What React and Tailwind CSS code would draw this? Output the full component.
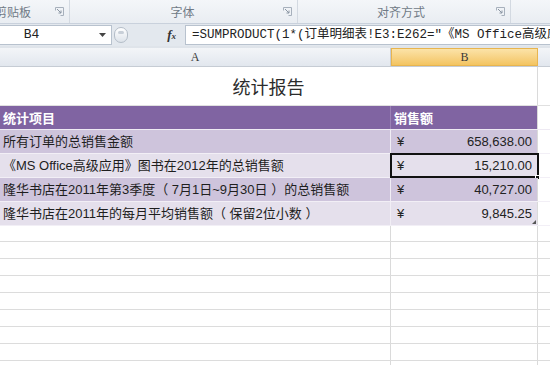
import React from 'react';

const cjk = { fontFamily: '"Noto Sans CJK SC", "Noto Sans", sans-serif' };
const cell = { fontFamily: '"Liberation Sans", "Noto Sans CJK SC", sans-serif' };
const mono = { fontFamily: '"Liberation Mono", "Noto Sans CJK SC", monospace' };

function Launcher() {
  return (
    <svg width="9" height="9" viewBox="0 0 9 9" className="shrink-0">
      <path d="M0.5 3.5V0.5H8.5V8.5H5.5" fill="none" stroke="#a7b0bc" strokeWidth="1" />
      <path d="M2 2L6 6M6 3.5V6H3.5" fill="none" stroke="#8a95a3" strokeWidth="1" />
    </svg>
  );
}

const rows = [
  { label: '所有订单的总销售金额', value: '658,638.00', bg: 'bg-[#cec4dc]' },
  { label: '《MS Office高级应用》图书在2012年的总销售额', value: '15,210.00', bg: 'bg-[#e5e0ec]', active: true },
  { label: '隆华书店在2011年第3季度（ 7月1日~9月30日 ）的总销售额', value: '40,727.00', bg: 'bg-[#cec4dc]' },
  { label: '隆华书店在2011年的每月平均销售额（ 保留2位小数 ）', value: '9,845.25', bg: 'bg-[#e5e0ec]', last: true },
];

export default function App() {
  return (
    <div className="w-[550px] h-[365px] overflow-hidden bg-white flex flex-col" style={cjk}>
      {/* ribbon group labels */}
      <div className="h-[24px] shrink-0 flex bg-gradient-to-b from-[#f4f6f9] to-[#e9edf2] border-b border-[#c9d1dc] text-[12px] text-[#707a86]">
        <div className="w-[70px] flex items-center justify-between pr-[5px] border-r border-[#d3d9e1]">
          <span className="-ml-[5px]">剪贴板</span>
          <Launcher />
        </div>
        <div className="w-[228px] flex items-center pr-[5px] border-r border-[#d3d9e1]">
          <span className="flex-1 text-center pl-[12px]">字体</span>
          <Launcher />
        </div>
        <div className="w-[213px] flex items-center pr-[5px] border-r border-[#d3d9e1]">
          <span className="flex-1 text-center pl-[8px]">对齐方式</span>
          <Launcher />
        </div>
        <div className="flex-1" />
      </div>

      {/* formula bar */}
      <div className="h-[22px] shrink-0 flex items-center bg-[#e3e8ee]">
        <div className="w-[112px] h-[20px] bg-white border border-l-0 border-[#b8c2ce] flex items-center">
          <span className="flex-1 text-center text-[13px] text-[#222] pr-[36px]" style={mono}>B4</span>
          <svg width="7" height="4" viewBox="0 0 7 4" className="mr-[5px]">
            <path d="M0 0H7L3.5 4Z" fill="#444" />
          </svg>
        </div>
        <div className="w-[14px] h-[16px] ml-[2px] rounded-full border border-[#b4bdc8] bg-gradient-to-b from-white to-[#dde3ea] flex items-start justify-center">
          <div className="w-[6px] h-[3px] mt-[3px] rounded-full bg-[#c8cfd8]" />
        </div>
        <div className="flex-1 flex items-center justify-end pr-[9px]">
          <span className="italic text-[13px] text-[#333] font-semibold" style={{ fontFamily: '"Liberation Serif", serif' }}>
            f<span className="text-[9px]">x</span>
          </span>
        </div>
        <div className="w-[365px] h-[20px] bg-white border-y border-l border-[#b8c2ce] flex items-center pl-[6px] overflow-hidden whitespace-nowrap text-[12.5px] text-[#222]" style={mono}>
          =SUMPRODUCT(1*(订单明细表!E3:E262="《MS Office高级应用》")*订单明细表!H3:H262)
        </div>
      </div>
      <div className="h-[2px] shrink-0 bg-[#dfe4ea]" />

      {/* column headers */}
      <div className="h-[19px] shrink-0 flex text-[12px] text-[#3a3a3a] border-b border-[#c6ccd4]" style={{ fontFamily: '"Liberation Serif", "Noto Sans CJK SC", serif' }}>
        <div className="w-[391px] flex items-center justify-center bg-gradient-to-b from-[#f3f5f8] to-[#e2e7ee] border-r border-[#c6ccd4]">A</div>
        <div className="w-[147px] flex items-center justify-center bg-gradient-to-b from-[#fbe3a8] to-[#f3c460] border border-[#e8b54f]">B</div>
        <div className="flex-1 bg-gradient-to-b from-[#f3f5f8] to-[#e2e7ee]" />
      </div>

      {/* title row */}
      <div className="h-[39px] shrink-0 flex border-b border-[#e0e0e0]">
        <div className="w-[538px] flex items-center justify-center text-[18px] text-[#2b2b2b] border-r border-[#dadada]">统计报告</div>
        <div className="flex-1" />
      </div>

      {/* table header */}
      <div className="h-[24px] shrink-0 flex border-b border-[#eeeaf3]">
        <div className="w-[391px] bg-[#8064a2] flex items-center pl-[3px] text-[13px] font-bold text-white border-r border-[#9a82b6]">统计项目</div>
        <div className="w-[147px] bg-[#8064a2] flex items-center pl-[3px] text-[13px] font-bold text-white border-r border-[#dadada]">销售额</div>
        <div className="flex-1" />
      </div>

      {rows.map((r, i) => (
        <div key={i} className="h-[24px] shrink-0 flex border-b border-[#f2eff6]" style={cell}>
          <div className={`w-[391px] ${r.bg} flex items-center pl-[3px] text-[13px] text-[#1e1e1e] whitespace-nowrap border-r border-[#f1eef5]`}>
            {r.label}
          </div>
          <div className={`w-[147px] ${r.bg} relative flex items-center justify-between pl-[6px] pr-[5px] text-[13px] text-[#222] border-r border-[#dadada] ${r.active ? 'outline-2 outline-[#111] -outline-offset-1' : ''}`}>
            <span>¥</span>
            <span>{r.value}</span>
            {r.active && <div className="absolute -right-[3px] -bottom-[3px] w-[5px] h-[5px] bg-[#111] border border-white" />}
            {r.last && (
              <svg width="4" height="4" viewBox="0 0 4 4" className="absolute right-[1px] bottom-[1px]">
                <path d="M4 0V4H0Z" fill="#555" />
              </svg>
            )}
          </div>
          <div className="flex-1" />
        </div>
      ))}

      {/* empty grid rows */}
      {[16, 17, 17, 17, 17, 17, 17, 17, 17].map((h, i) => (
        <div key={i} className={`${h === 16 ? 'h-[16px]' : 'h-[17px]'} shrink-0 flex border-b border-[#dcdcdc]`}>
          <div className="w-[391px] border-r border-[#dadada]" />
          <div className="w-[147px] border-r border-[#dadada]" />
          <div className="flex-1" />
        </div>
      ))}
    </div>
  );
}
